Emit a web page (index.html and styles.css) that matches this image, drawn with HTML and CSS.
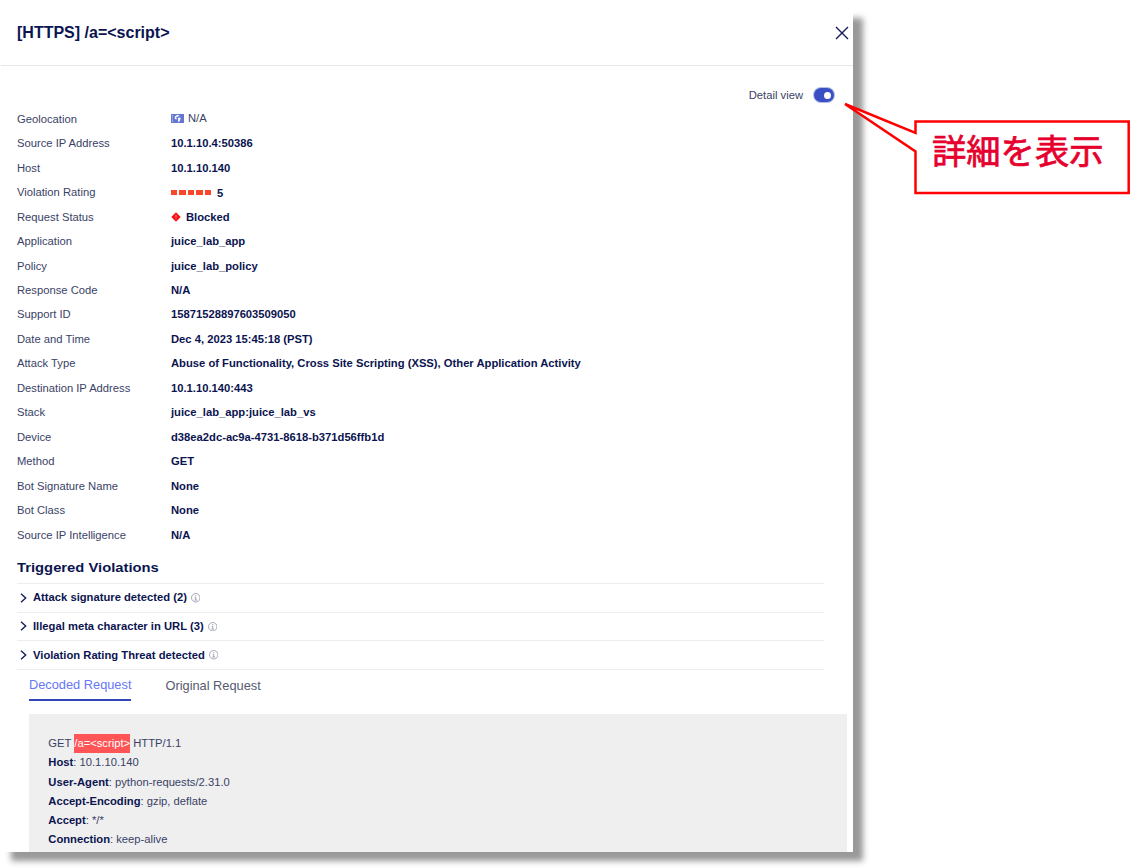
FILE: index.html
```html
<!DOCTYPE html>
<html lang="ja">
<head>
<meta charset="utf-8">
<title>[HTTPS] /a=&lt;script&gt;</title>
<link rel="stylesheet" href="styles.css">
</head>
<body>
<main class="panel">
  <header class="header">
    <h1 class="title">[HTTPS] /a=&lt;script&gt;</h1>
    <svg class="close" width="14" height="14" viewBox="0 0 14 14"><path d="M1 1l12 12M13 1L1 13"/></svg>
  </header>
  <div class="view-toggle">
    <span>Detail view</span>
    <span class="switch"><span class="knob"></span></span>
  </div>
  <dl class="details">
    <dt>Geolocation</dt>
    <dd class="geo"><svg width="13" height="9" viewBox="0 0 13 9"><path fill="#6577d0" d="M0 0h13v9H0z"/><path fill="#aab5e8" d="M1 1h1.500L1.500 3v3l1 2H1z"/><path fill="#f1f3fd" d="M6.500.8l2 .4L7 2.500l-2 1 1 1.500-1 .6L3.500 4.500 4 2.300zM7 4l1.700-.7 1 1.200L8.500 7.500 7 8z"/></svg><span>N/A</span></dd>
    <dt>Source IP Address</dt><dd>10.1.10.4:50386</dd>
    <dt>Host</dt><dd>10.1.10.140</dd>
    <dt>Violation Rating</dt>
    <dd class="rating"><span class="bars"><i></i><i></i><i></i><i></i><i></i></span><span>5</span></dd>
    <dt>Request Status</dt>
    <dd class="status"><svg width="10" height="10" viewBox="0 0 10 10"><path fill="#fa0f14" d="M5 .3L9.700 5 5 9.700.3 5z"/><path stroke="#ff9ca0" d="M5 2.700v2.700M5 6.300v1"/></svg><span>Blocked</span></dd>
    <dt>Application</dt><dd>juice_lab_app</dd>
    <dt>Policy</dt><dd>juice_lab_policy</dd>
    <dt>Response Code</dt><dd>N/A</dd>
    <dt>Support ID</dt><dd>15871528897603509050</dd>
    <dt>Date and Time</dt><dd>Dec 4, 2023 15:45:18 (PST)</dd>
    <dt>Attack Type</dt><dd>Abuse of Functionality, Cross Site Scripting (XSS), Other Application Activity</dd>
    <dt>Destination IP Address</dt><dd>10.1.10.140:443</dd>
    <dt>Stack</dt><dd>juice_lab_app:juice_lab_vs</dd>
    <dt>Device</dt><dd>d38ea2dc-ac9a-4731-8618-b371d56ffb1d</dd>
    <dt>Method</dt><dd>GET</dd>
    <dt>Bot Signature Name</dt><dd>None</dd>
    <dt>Bot Class</dt><dd>None</dd>
    <dt>Source IP Intelligence</dt><dd>N/A</dd>
  </dl>
  <h2 class="section-title"><span>Triggered Violations</span></h2>
  <ul class="violations">
    <li><svg class="chevron" width="7" height="10" viewBox="0 0 7 10"><path d="M1 .7L5.700 5 1 9.300"/></svg><span>Attack signature detected (2)</span><svg class="info" width="9.500" height="9.500" viewBox="0 0 9 9"><circle cx="4.500" cy="4.500" r="4"/><path d="M3.500 4h1v2.700M3.200 6.700h2.600M4.500 2v1"/></svg></li>
    <li><svg class="chevron" width="7" height="10" viewBox="0 0 7 10"><path d="M1 .7L5.700 5 1 9.300"/></svg><span>Illegal meta character in URL (3)</span><svg class="info" width="9.500" height="9.500" viewBox="0 0 9 9"><circle cx="4.500" cy="4.500" r="4"/><path d="M3.500 4h1v2.700M3.200 6.700h2.600M4.500 2v1"/></svg></li>
    <li><svg class="chevron" width="7" height="10" viewBox="0 0 7 10"><path d="M1 .7L5.700 5 1 9.300"/></svg><span>Violation Rating Threat detected</span><svg class="info" width="9.500" height="9.500" viewBox="0 0 9 9"><circle cx="4.500" cy="4.500" r="4"/><path d="M3.500 4h1v2.700M3.200 6.700h2.600M4.500 2v1"/></svg></li>
  </ul>
  <nav class="tabs">
    <span class="tab active">Decoded Request</span>
    <span class="tab">Original Request</span>
  </nav>
  <div class="request">
    <div>GET <mark>/a=&lt;script&gt;</mark> HTTP/1.1</div>
    <div><b>Host</b>: 10.1.10.140</div>
    <div><b>User-Agent</b>: python-requests/2.31.0</div>
    <div><b>Accept-Encoding</b>: gzip, deflate</div>
    <div><b>Accept</b>: */*</div>
    <div><b>Connection</b>: keep-alive</div>
  </div>
</main>
<aside class="callout">
  <svg width="290" height="100" viewBox="0 0 290 100"><path d="M75.500 22.500H288.700V94H75.500V52.500L5 5 75.500 34z"/></svg>
  <span class="callout-text">詳細を表示</span>
</aside>
</body>
</html>
```
FILE: styles.css
```css
* { box-sizing: border-box; }
body {
  margin: 0;
  width: 1144px;
  height: 868px;
  overflow: hidden;
  position: relative;
  background: #fff;
  color: #394266;
  font-family: "Liberation Sans", Arial, sans-serif;
  font-size: 11.22px;
}
.panel {
  margin: 9px 0 0 1px;
  width: 852px;
  height: 843px;
  overflow: hidden;
  background: #fff;
  box-shadow: 10px 9px 6px #999;
}
.header {
  display: flex;
  align-items: center;
  justify-content: space-between;
  height: 57px;
  padding: 0 4px 8px 16px;
  border-bottom: 1px solid #e6e7ed;
}
.title {
  margin: 0;
  font-size: 16px;
  color: #0b1450;
}
.close { fill: none; stroke: #111a56; stroke-width: 1.4; }
.view-toggle {
  display: flex;
  align-items: center;
  justify-content: flex-end;
  gap: 11px;
  height: 40.5px;
  padding: 18px 19px 0 0;
}
.switch {
  width: 20px;
  height: 14px;
  padding: 3.500px;
  border-radius: 7px;
  background: #3a50c2;
  box-shadow: 0 0 0 1px #b3bce8;
  display: flex;
  justify-content: flex-end;
}
.knob { width: 7px; height: 7px; border-radius: 50%; background: #fff; }
.details {
  display: grid;
  grid-template-columns: 154px 1fr;
  grid-auto-rows: 24.470px;
  align-items: center;
  margin: 0;
  padding: 0 0 0 16px;
}
.details dd { margin: 0; color: #0b1450; font-weight: bold; }
.details .geo, .rating, .status { display: flex; align-items: center; }
.details .geo { gap: 4px; font-weight: normal; color: #394266; padding-bottom: 1px; }
.rating { gap: 6px; padding-top: 2px; }
.bars { display: flex; gap: 2px; margin-bottom: 1px; }
.bars i { width: 6.400px; height: 5px; background: #fa4729; }
.status { gap: 5px; padding-top: 1px; }
.section-title {
  margin: 0;
  padding: 11px 0 0 16px;
  height: 36px;
  line-height: 19px;
  font-size: 13.5px;
  color: #0b1450;
}
.section-title span {
  display: inline-block;
  transform: scaleX(1.095);
  transform-origin: 0 0;
}
.violations { list-style: none; margin: 0 29px 0 16px; padding: 0; border-top: 1px solid #ededf0; }
.violations li {
  display: flex;
  align-items: center;
  height: 28.700px;
  padding-left: 3px;
  border-bottom: 1px solid #ededf0;
  font-weight: bold;
  color: #0b1450;
}
.violations li > span { margin-top: -1px; }
.chevron { margin-right: 6px; fill: none; stroke: #17205a; stroke-width: 1.4; }
.info { margin-left: 4px; fill: none; stroke: #8589a0; stroke-width: .7; }
.tabs { display: flex; gap: 34px; padding-left: 28px; height: 44px; }
.tab { height: 31px; line-height: 31.500px; font-size: 12.8px; color: #555a70; }
.tab.active { color: #6678f5; border-bottom: 2px solid #3445ba; line-height: 30px; }
.request {
  margin: 0 6px 0 28px;
  height: 150px;
  padding: 20px 20px 20px 19.300px;
  background: #efefef;
  line-height: 19.3px;
}
.request b { color: #0b1450; }
.request mark { display: inline-block; background: #ff5557; color: #fff; }
.callout { position: absolute; left: 840px; top: 99px; }
.callout svg { display: block; fill: #fff; stroke: #f00; stroke-width: 2.500; }
.callout-text {
  position: absolute;
  left: 92px;
  top: 30px;
  white-space: nowrap;
  font: 400 34.300px/40px "Noto Sans CJK JP", sans-serif;
  -webkit-text-stroke: .7px #e6002d;
  color: #e6002d;
}
```
